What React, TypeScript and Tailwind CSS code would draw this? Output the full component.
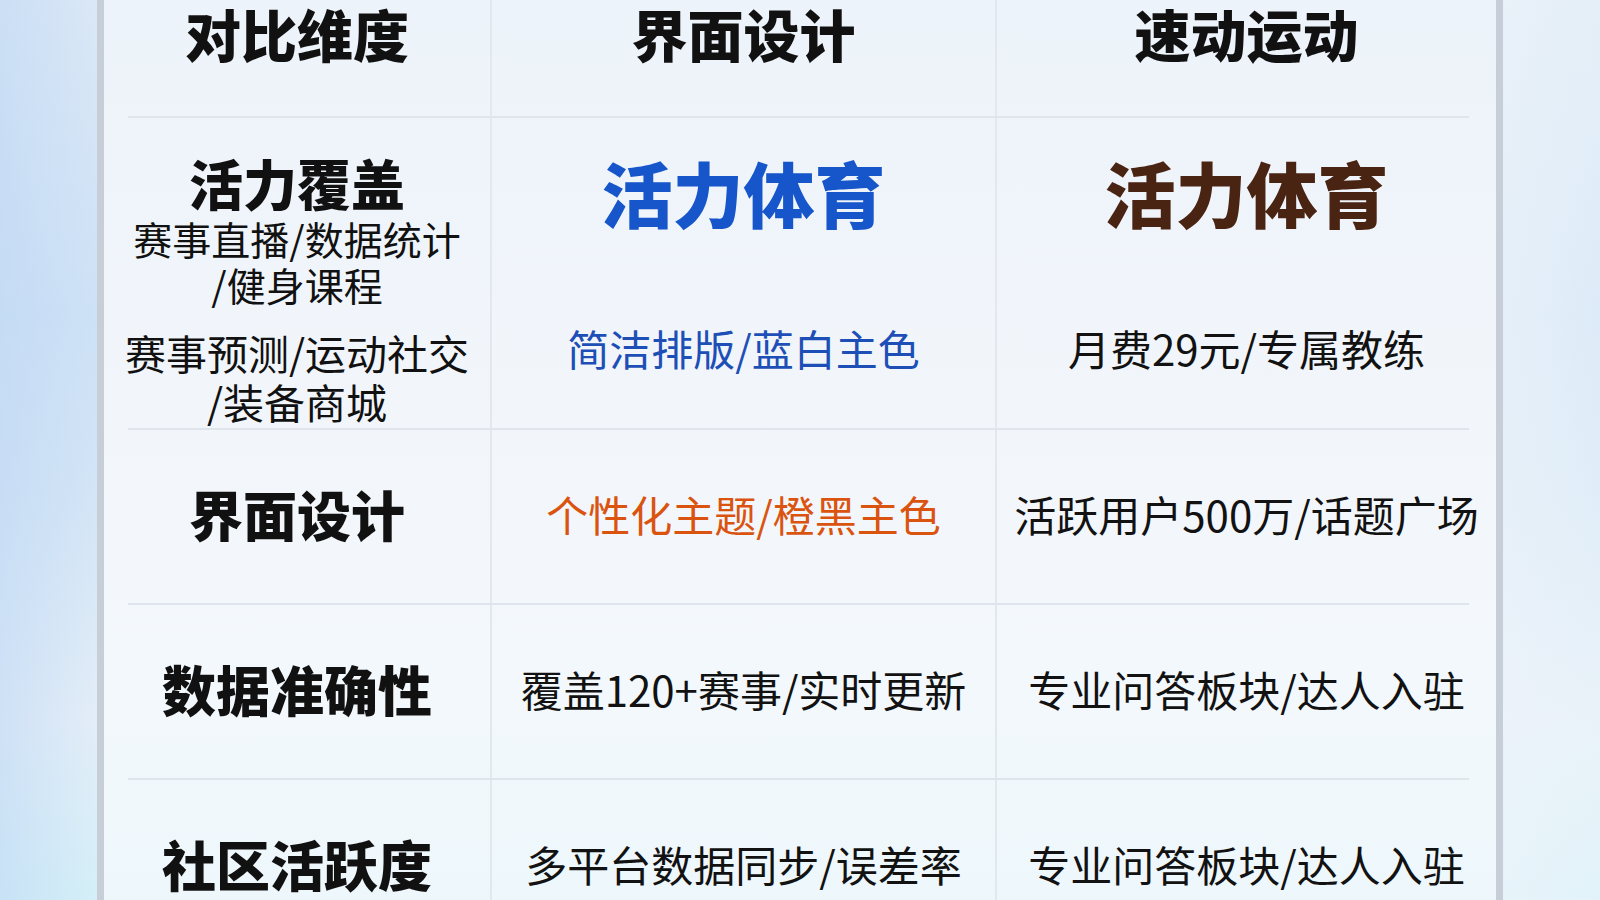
import React from "react";

const font = { fontFamily: '"Noto Sans CJK SC", "Noto Sans", sans-serif' };

function Sep() {
  return (
    <div className="grid grid-cols-[386px_505px_501px] h-[2px]">
      <div className="ml-[24px] bg-[#dfe5ec]" />
      <div className="bg-[#dfe5ec]" />
      <div className="mr-[27px] bg-[#dfe5ec]" />
    </div>
  );
}

function Row({
  label,
  mid,
  right,
  midClass = "text-[#121212]",
}: {
  label: string;
  mid: string;
  right: string;
  midClass?: string;
}) {
  return (
    <div className="grid grid-cols-[386px_505px_501px] h-[173px]">
      <div className="flex items-center justify-center pb-[6px]">
        <span className="text-[54px] leading-[60px] font-black text-[#111111] whitespace-nowrap">{label}</span>
      </div>
      <div className="flex items-center justify-center pb-[6px] border-l-2 border-[#e3e8ef]">
        <span className={`text-[42px] leading-[50px] whitespace-nowrap ${midClass}`}>{mid}</span>
      </div>
      <div className="flex items-center justify-center pb-[6px] border-l-2 border-[#e3e8ef]">
        <span className="text-[42px] leading-[50px] whitespace-nowrap text-[#121212]">{right}</span>
      </div>
    </div>
  );
}

export default function App() {
  return (
    <div
      style={font}
      className="w-[1600px] h-[900px] overflow-hidden bg-[linear-gradient(90deg,rgba(188,214,244,0.55)_0%,rgba(188,214,244,0)_7%,rgba(255,255,255,0)_93.5%,rgba(238,244,250,0.7)_94%,rgba(238,246,250,0.45)_100%),linear-gradient(180deg,#dde9f6_0%,#cfe2f6_35%,#d5e6f6_55%,#e6eff8_80%,#d6f1f8_100%)]"
    >
      <div className="ml-[97px] w-[1406px] h-[960px] border-x-[7px] border-[#c8ced7] bg-[linear-gradient(180deg,#edf3fa_0%,#f2f6fb_45%,#f3f8fc_70%,#ecf7fb_100%)]">
        {/* Header */}
        <div className="grid grid-cols-[386px_505px_501px] h-[116px]">
          <div className="flex justify-center pt-[3px]">
            <span className="text-[56px] leading-[60px] font-black text-[#111111]">对比维度</span>
          </div>
          <div className="flex justify-center pt-[3px] border-l-2 border-[#e3e8ef]">
            <span className="text-[56px] leading-[60px] font-black text-[#111111]">界面设计</span>
          </div>
          <div className="flex justify-center pt-[3px] border-l-2 border-[#e3e8ef]">
            <span className="text-[56px] leading-[60px] font-black text-[#111111]">速动运动</span>
          </div>
        </div>
        <Sep />
        {/* Row 2 */}
        <div className="grid grid-cols-[386px_505px_501px] h-[310px]">
          <div className="flex flex-col items-center pt-[37px] text-[#111111]">
            <span className="text-[54px] leading-[56px] font-black">活力覆盖</span>
            <span className="mt-[4px] text-[39px] leading-[46px] whitespace-nowrap">赛事直播/数据统计</span>
            <span className="text-[39px] leading-[46px] whitespace-nowrap">/健身课程</span>
            <span className="mt-[20px] text-[41px] leading-[50px] whitespace-nowrap">赛事预测/运动社交</span>
            <span className="text-[41px] leading-[48px] whitespace-nowrap">/装备商城</span>
          </div>
          <div className="flex flex-col items-center pt-[35px] border-l-2 border-[#e3e8ef]">
            <span className="text-[71px] leading-[76px] font-black text-[#1656ca]">活力体育</span>
            <span className="mt-[94px] text-[42px] leading-[50px] whitespace-nowrap text-[#1d4fb6]">简洁排版/蓝白主色</span>
          </div>
          <div className="flex flex-col items-center pt-[35px] border-l-2 border-[#e3e8ef]">
            <span className="text-[71px] leading-[76px] font-black text-[#4a2412]">活力体育</span>
            <span className="mt-[94px] text-[42px] leading-[50px] whitespace-nowrap text-[#121212]">月费29元/专属教练</span>
          </div>
        </div>
        <Sep />
        <Row label="界面设计" mid="个性化主题/橙黑主色" right="活跃用户500万/话题广场" midClass="text-[#da5410]" />
        <Sep />
        <Row label="数据准确性" mid="覆盖120+赛事/实时更新" right="专业问答板块/达人入驻" />
        <Sep />
        <Row label="社区活跃度" mid="多平台数据同步/误差率" right="专业问答板块/达人入驻" />
      </div>
    </div>
  );
}
